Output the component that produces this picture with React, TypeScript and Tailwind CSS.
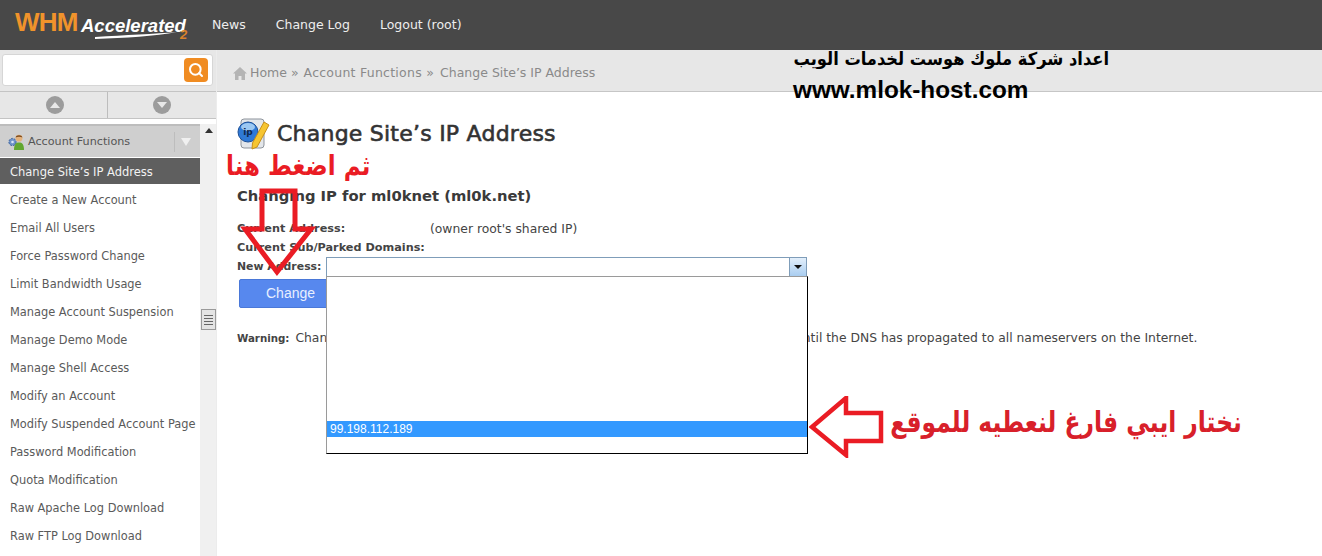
import React from 'react'
import { Search } from 'lucide-react'

const DEJAVU = "font-['DejaVu_Sans',sans-serif]"

const MENU_ITEMS = [
  'Create a New Account',
  'Email All Users',
  'Force Password Change',
  'Limit Bandwidth Usage',
  'Manage Account Suspension',
  'Manage Demo Mode',
  'Manage Shell Access',
  'Modify an Account',
  'Modify Suspended Account Page',
  'Password Modification',
  'Quota Modification',
  'Raw Apache Log Download',
  'Raw FTP Log Download',
]

function Logo() {
  return (
    <div className="relative w-[190px] h-[50px] ml-[15px] shrink-0">
      <span className="absolute left-0 top-[9px] text-[26px] leading-[26px] font-bold text-[#f0932b] font-['Liberation_Sans',sans-serif] tracking-[-0.8px]">
        WHM
      </span>
      <span className="absolute left-[66px] top-[13px] text-[18.5px] leading-[26px] font-bold italic text-white font-['Liberation_Sans',sans-serif]">
        Accelerated
      </span>
      <span className="absolute left-[165px] top-[28px] text-[13px] leading-[13px] font-bold italic text-[#d9822b] font-['Liberation_Sans',sans-serif]">
        2
      </span>
      <svg className="absolute left-[80px] top-[32px]" width="82" height="8" viewBox="0 0 82 8">
        <path d="M0 7 C 30 6, 60 4, 82 0 C 60 2, 30 3, 0 5 Z" fill="#ffffff" />
      </svg>
    </div>
  )
}

function RoundArrow({ up }: { up?: boolean }) {
  return (
    <div className="w-[18px] h-[18px] rounded-full bg-[#9c9c9c] flex items-center justify-center">
      <svg width="10" height="6" viewBox="0 0 10 6">
        <path d={up ? 'M5 0 L10 6 L0 6 Z' : 'M0 0 L10 0 L5 6 Z'} fill="#e8e8e8" />
      </svg>
    </div>
  )
}

function HomeIcon() {
  return (
    <svg width="14" height="13" viewBox="0 0 14 13" className="shrink-0">
      <path d="M7 0 L14 6.5 L12 6.5 L12 13 L8.5 13 L8.5 9 L5.5 9 L5.5 13 L2 13 L2 6.5 L0 6.5 Z" fill="#b4b4b4" />
    </svg>
  )
}

function AccountIcon() {
  return (
    <svg width="17" height="16" viewBox="0 0 17 16" className="shrink-0">
      <circle cx="4.5" cy="8" r="3.6" fill="#6f93c9" stroke="#41679f" strokeWidth="1" strokeDasharray="2 1" />
      <circle cx="4.5" cy="8" r="1.3" fill="#dbe6f5" />
      <circle cx="11" cy="4.2" r="3.4" fill="#e4b27c" />
      <path d="M7.6 3.6 C8 0.4 14 0.4 14.4 3.6 C12.5 2.4 9.5 2.4 7.6 3.6 Z" fill="#7b4a1e" />
      <path d="M6 16 C6 10 8 8.4 11 8.4 C14 8.4 16 10 16 16 Z" fill="#62a72f" />
    </svg>
  )
}

function PageIcon() {
  return (
    <svg width="34" height="32" viewBox="0 0 34 32" className="shrink-0">
      <rect x="4" y="1" width="23" height="29" rx="3" fill="#e3e6ea" stroke="#8d939b" />
      <circle cx="11" cy="14" r="10" fill="#2f79d6" stroke="#1c4f96" />
      <ellipse cx="11" cy="9" rx="7" ry="4" fill="#9cc8f2" />
      <text x="11" y="17" textAnchor="middle" fontSize="9" fontWeight="700" fill="#10294f" fontFamily="DejaVu Sans, sans-serif">ip</text>
      <path d="M27 4 L32 7 L20 29 L15 31 L15.5 25 Z" fill="#f6c531" stroke="#c8901a" />
    </svg>
  )
}

function DownArrow() {
  return (
    <svg width="80" height="90" viewBox="0 0 80 90" className="absolute left-[240px] top-[188px]" fill="none">
      <path d="M22 3 H55 V41 H71 L37 84 L5 41 H22 Z" stroke="#ea1c24" strokeWidth="5" />
    </svg>
  )
}

function LeftArrow() {
  return (
    <svg width="76" height="62" viewBox="0 0 76 62" className="absolute left-[809px] top-[396px]" fill="none">
      <path d="M3 31 L37 2 V17 H72 V45 H37 V59 Z" stroke="#ea1c24" strokeWidth="4.5" />
    </svg>
  )
}

export default function App() {
  return (
    <div className={`relative w-[1322px] h-[556px] overflow-hidden bg-white text-[#444] ${DEJAVU}`}>
      {/* Barra superior */}
      <header className="h-[50px] bg-[#484848] flex items-center">
        <Logo />
        <nav className="flex items-center gap-[30px] ml-[7px] text-[12.5px] text-[#eeeeee]">
          <span>News</span>
          <span>Change Log</span>
          <span>Logout (root)</span>
        </nav>
      </header>

      <div className="flex h-[506px]">
        {/* Columna izquierda */}
        <aside className="w-[217px] shrink-0 flex flex-col border-r border-[#ececec]">
          <div className="h-[41px] bg-[#e7e7e7] pt-[4px] pl-[2px] pr-[3px]">
            <div className="h-[32px] bg-white border border-[#d6d6d6] rounded-[3px] flex items-center justify-end pr-[4px]">
              <div className="w-[24px] h-[24px] rounded-[4px] bg-[#f08c22] flex items-center justify-center">
                <Search size={16} strokeWidth={3} className="text-white" />
              </div>
            </div>
          </div>
          <div className="h-[28px] flex bg-[#e7e7e7] border-y border-[#c4c4c4]">
            <div className="w-[108px] pl-[3px] flex items-center justify-center border-r border-[#bdbdbd]">
              <RoundArrow up />
            </div>
            <div className="flex-1 flex items-center justify-center">
              <RoundArrow />
            </div>
          </div>
          <div className="flex flex-1 pt-[5px] min-h-0">
            <div className="w-[200px] shrink-0">
              <div className="h-[33px] bg-[#cfcfcf] border-t-2 border-[#bdbdbd] flex items-center pl-[8px] text-[11.2px] text-[#555]">
                <AccountIcon />
                <span className="ml-[3px] flex-1 pt-[1px]">Account Functions</span>
                <div className="h-[20px] border-l border-[#bdbdbd] w-[26px] pr-[4px] flex items-center justify-center">
                  <svg width="10" height="8" viewBox="0 0 10 8">
                    <path d="M0 0 H10 L5 8 Z" fill="#f0f0f0" />
                  </svg>
                </div>
              </div>
              <div className="h-[26px] mt-[1px] bg-[#5f5f5f] text-[#f2f2f2] text-[11.5px] leading-[28px] pl-[10px]">
                Change Site’s IP Address
              </div>
              <div className="pt-[2px]">
                {MENU_ITEMS.map((item) => (
                  <div key={item} className="h-[28px] text-[11.4px] leading-[28px] pl-[10px] text-[#5a5a5a] whitespace-nowrap">
                    {item}
                  </div>
                ))}
              </div>
            </div>
            <div className="w-[16px] bg-[#f0f0f0] relative">
              <svg width="8" height="5" viewBox="0 0 8 5" className="absolute left-[5px] top-[4px]">
                <path d="M4 0 L8 5 H0 Z" fill="#333" />
              </svg>
              <div className="absolute left-[1px] top-[185px] w-[15px] h-[21px] bg-[#e4e4e4] border border-[#9a9a9a] flex flex-col items-center justify-center gap-[2px]">
                <div className="w-[9px] h-px bg-[#666]" />
                <div className="w-[9px] h-px bg-[#666]" />
                <div className="w-[9px] h-px bg-[#666]" />
                <div className="w-[9px] h-px bg-[#666]" />
              </div>
            </div>
          </div>
        </aside>

        {/* Contenido principal */}
        <main className="flex-1 min-w-0">
          <div className="h-[42px] bg-[#e7e7e7] border-b border-[#c6c6c6] flex items-center pl-[16px] pt-[5px] text-[12.5px] text-[#8a8a8a] whitespace-nowrap">
            <HomeIcon />
            <span className="ml-[3px]">Home »</span>
            <span className="ml-[5px] tracking-[0.25px]">Account Functions »</span>
            <span className="ml-[6px]">Change Site’s IP Address</span>
          </div>
          <div className="pl-[20px] pt-[25px]">
            <div className="flex items-center h-[34px]">
              <PageIcon />
              <h1 className="ml-[6px] text-[22px] leading-[28px] font-normal text-[#333] tracking-[0.23px] [-webkit-text-stroke:0.6px_#333] whitespace-nowrap">
                Change Site’s IP Address
              </h1>
            </div>
            <h2 className="mt-[35px] text-[14.75px] leading-[20px] font-bold text-[#3a3a3a] whitespace-nowrap">
              Changing IP for ml0knet (ml0k.net)
            </h2>
            <div className="mt-[14px] text-[12.35px] leading-[18px] flex">
              <b className="w-[193px] text-[11.25px]">Current Address:</b>
              <span>(owner root's shared IP)</span>
            </div>
            <div className="text-[11.25px] leading-[19px] font-bold whitespace-nowrap">Current Sub/Parked Domains:</div>
            <div className="flex items-center h-[20px]">
              <b className="w-[89px] shrink-0 text-[10.9px] whitespace-nowrap">New Address:</b>
              <div className="w-[481px] h-[20px] bg-white border border-[#7f9db9] flex justify-end">
                <div className="w-[17px] h-full bg-gradient-to-b from-[#e3effb] to-[#a9cdf0] border-l border-[#7f9db9] flex items-center justify-center">
                  <svg width="8" height="4" viewBox="0 0 8 4">
                    <path d="M0 0 H8 L4 4 Z" fill="#111" />
                  </svg>
                </div>
              </div>
            </div>
            <button className="block ml-[2px] mt-[2px] w-[110px] h-[29px] bg-[#5788ee] border border-[#4a78d8] rounded-[2px] text-[14px] text-[#e8efff] font-['Liberation_Sans',sans-serif] text-left pl-[26px]">
              Change
            </button>
            <p className="mt-[21px] text-[12.35px] leading-[18px] whitespace-nowrap">
              <b className="text-[10.25px] mr-[2px]">Warning:</b> Changing the IP address of this site may render the site temporarily unavailable until the DNS has propagated to all nameservers on the Internet.
            </p>
          </div>
        </main>
      </div>

      {/* Lista desplegada del select */}
      <div className="absolute left-[326px] top-[276px] w-[482px] h-[178px] bg-white border border-black border-l-[#9a9a9a] border-t-[#9a9a9a]">
        <div className="mt-[144px] h-[16px] bg-[#3399ff] text-white text-[12px] leading-[16px] pl-[3px] font-['Liberation_Sans',sans-serif]">
          99.198.112.189
        </div>
      </div>

      {/* Anotaciones sobre la captura */}
      <div className="absolute left-[780px] top-[47px] w-[329px] text-right font-['DejaVu_Sans',sans-serif] font-bold text-[16.3px] leading-[24px] text-black whitespace-nowrap scale-y-[1.1]" dir="rtl">
        اعداد شركة ملوك هوست لخدمات الويب
      </div>
      <div className="absolute left-[793px] top-[76px] font-['Liberation_Sans',sans-serif] font-bold text-[24.3px] leading-[28px] text-black whitespace-nowrap">
        www.mlok-host.com
      </div>
      <div className="absolute left-[226px] top-[150px] font-['DejaVu_Sans',sans-serif] font-bold text-[23px] leading-[30px] text-[#ea1c24] whitespace-nowrap scale-y-[1.2]" dir="rtl">
        ثم اضغط هنا
      </div>
      <div className="absolute left-[890px] top-[404px] w-[352px] text-center font-['DejaVu_Sans',sans-serif] font-bold text-[23.4px] leading-[36px] text-[#d8202a] whitespace-nowrap scale-y-[1.25]" dir="rtl">
        نختار ايبي فارغ لنعطيه للموقع
      </div>
      <DownArrow />
      <LeftArrow />
    </div>
  )
}
